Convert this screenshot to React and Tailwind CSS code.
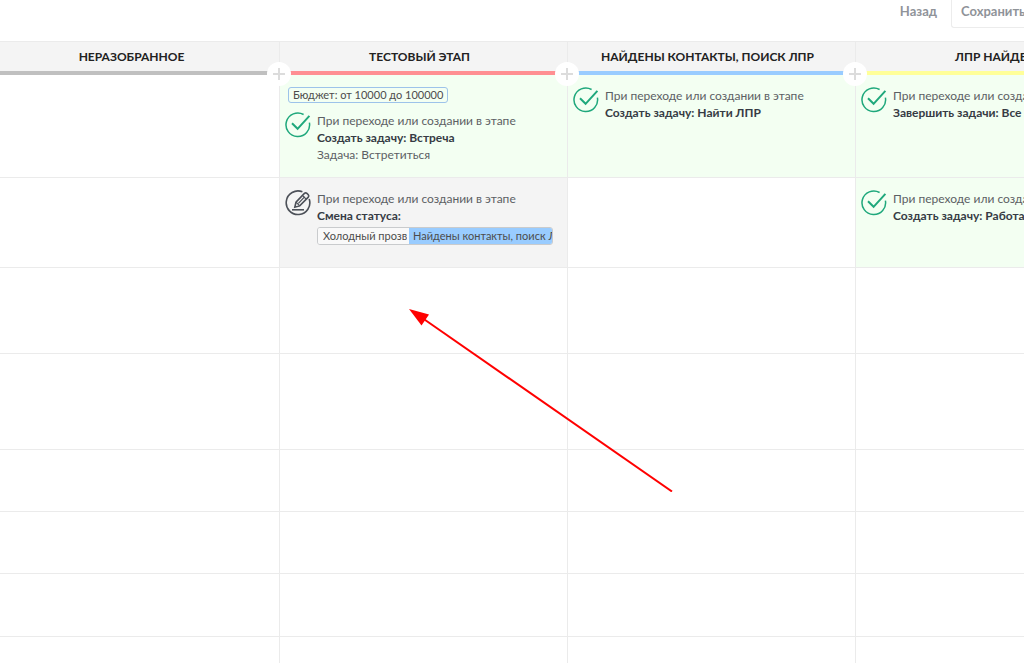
const STAGES = [
  { title: "Неразобранное", stripe: "bg-[#c0c0c0]" },
  { title: "Тестовый этап", stripe: "bg-[#ff8f92]" },
  { title: "Найдены контакты, поиск ЛПР", stripe: "bg-[#99ccff]" },
  { title: "ЛПР найден", stripe: "bg-[#ffff99]" },
];

const TRIGGER_TEXT = "При переходе или создании в этапе";

const ROWS = [
  {
    height: "h-[103px]",
    cells: [
      null,
      { type: "task", filter: "Бюджет: от 10000 до 100000", title: "Создать задачу: Встреча", note: "Задача: Встретиться" },
      { type: "task", title: "Создать задачу: Найти ЛПР" },
      { type: "task", title: "Завершить задачи: Все" },
    ],
  },
  {
    height: "h-[90px]",
    cells: [
      null,
      { type: "status", title: "Смена статуса:", from: "Холодный прозвон", to: "Найдены контакты, поиск ЛПР" },
      null,
      { type: "task", title: "Создать задачу: Работа" },
    ],
  },
  { height: "h-[86px]", cells: [null, null, null, null] },
  { height: "h-[96px]", cells: [null, null, null, null] },
  { height: "h-[62px]", cells: [null, null, null, null] },
  { height: "h-[62px]", cells: [null, null, null, null] },
  { height: "h-[63px]", cells: [null, null, null, null] },
  { height: "h-[62px]", cells: [null, null, null, null] },
];

const TaskIcon = () => (
  <svg viewBox="0 0 26 26" className="w-[26px] h-[26px] shrink-0" fill="none" stroke="#1fa87c" strokeWidth="1.5">
    <path d="M18.6 2.5A11.8 11.8 0 1 0 24.4 10.6" />
    <path d="M7 11.2l5.6 5.6L24.4 3.8" strokeWidth="2" />
  </svg>
);

const StatusIcon = () => (
  <svg viewBox="0 0 26 26" className="w-[26px] h-[26px] shrink-0" fill="none" stroke="#4c5058" strokeWidth="1.6">
    <path d="M17.4 1.8A11.8 11.8 0 1 0 24.2 9" />
    <path d="M9.8 17.2l1.2-5 8.4-8.8q1.2-1.1 2.5 0l1.4 1.3q1 1.2 0 2.4l-8.6 8.8z" />
    <path d="M11 12.2l3.7 3.7M13.4 13.4l6.4-6.8M17.4 5.4l3.8 3.8" strokeWidth="1.2" />
    <path d="M7 19.8h12" />
  </svg>
);

const AddButton = () => (
  <button
    type="button"
    aria-label="Добавить"
    className="absolute -right-3 top-5 z-10 flex items-center justify-center w-6 h-6 rounded-full bg-white text-[#dcdcdc]"
  >
    <svg viewBox="0 0 12 12" className="w-3 h-3" stroke="currentColor" strokeWidth="2">
      <path d="M6 0v12M0 6h12" />
    </svg>
  </button>
);

const StatusChange = ({ from, to }) => (
  <div className="flex w-[236px] h-[18px] mt-[3px] border border-[#c9cbcd] rounded-[3px] overflow-hidden text-[11px] leading-4 text-[#4c4c4c]">
    <div className="w-[91px] pl-[5px] pr-0.5 bg-[#f9f9f9]">
      <span className="block overflow-hidden">{from}</span>
    </div>
    <div className="flex-1 min-w-0 pl-1 bg-[#99ccff]">
      <span className="block overflow-hidden">{to}</span>
    </div>
  </div>
);

const Card = ({ card }) => (
  <div className="px-[5px]">
    {card.filter && (
      <div className="flex h-4 mt-3 ml-[3px] mb-[9px]">
        <span className="px-1 border border-[#9dc3ea] rounded-[3px] text-[11px] leading-[14px] text-[#4c4c4c]">{card.filter}</span>
      </div>
    )}
    <div className={card.filter ? "flex gap-1.5" : "flex gap-1.5 pt-3"}>
      {card.type === "task" ? <TaskIcon /> : <StatusIcon />}
      <div className="min-w-0 text-[12px] leading-[17px] text-[#5c6064] whitespace-nowrap">
        <p>{TRIGGER_TEXT}</p>
        <p className="font-bold text-[#363b44]">{card.title}</p>
        {card.note && <p>{card.note}</p>}
        {card.from && <StatusChange from={card.from} to={card.to} />}
      </div>
    </div>
  </div>
);

const cellColor = (card) => {
  if (!card) return "bg-white";
  return card.type === "task" ? "bg-[#f3fff2]" : "bg-[#f4f4f4]";
};

const Arrow = () => (
  <svg viewBox="0 0 264 184" className="absolute left-[409px] top-[308px] w-[264px] h-[184px] pointer-events-none">
    <path d="M14 10.5L263 183.5" stroke="#ff0000" strokeWidth="2" />
    <path d="M0 1l20 5.5-7.5 11z" fill="#ff0000" />
  </svg>
);

const App = () => {
  return (
    <div className="relative flex flex-col h-screen overflow-hidden bg-white font-['Lato','Noto_Sans',sans-serif]">
      <header className="flex justify-end items-start shrink-0 h-[41px] text-[13px] font-bold text-[#8f9399]">
        <button type="button" className="h-6 px-3.5">Назад</button>
        <button type="button" className="h-7 w-[73px] pb-1 pl-[9px] border-l border-b border-[#ececec] rounded-bl-[3px] text-left whitespace-nowrap overflow-hidden">
          Сохранить
        </button>
      </header>
      <main className="flex-1 min-h-0 -ml-2 overflow-hidden">
        <table className="table-fixed w-full min-w-[1152px] border-separate border-spacing-0">
          <thead>
            <tr>
              {STAGES.map((stage) => (
                <th key={stage.title} className="relative h-[34px] p-0 bg-[#f4f4f4] border-t border-r border-[#ebebeb]">
                  <div className="h-7 pr-2 text-[12px] leading-7 uppercase text-[#222222]">{stage.title}</div>
                  <div className={`h-1 ${stage.stripe}`} />
                  <AddButton />
                </th>
              ))}
            </tr>
          </thead>
          <tbody>
            {ROWS.map((row, i) => (
              <tr key={i}>
                {row.cells.map((card, j) => (
                  <td key={j} className={`p-0 align-top border-r border-b border-[#ebebeb] ${row.height} ${cellColor(card)}`}>
                    {card && <Card card={card} />}
                  </td>
                ))}
              </tr>
            ))}
          </tbody>
        </table>
      </main>
      <Arrow />
    </div>
  );
};

export default App;
